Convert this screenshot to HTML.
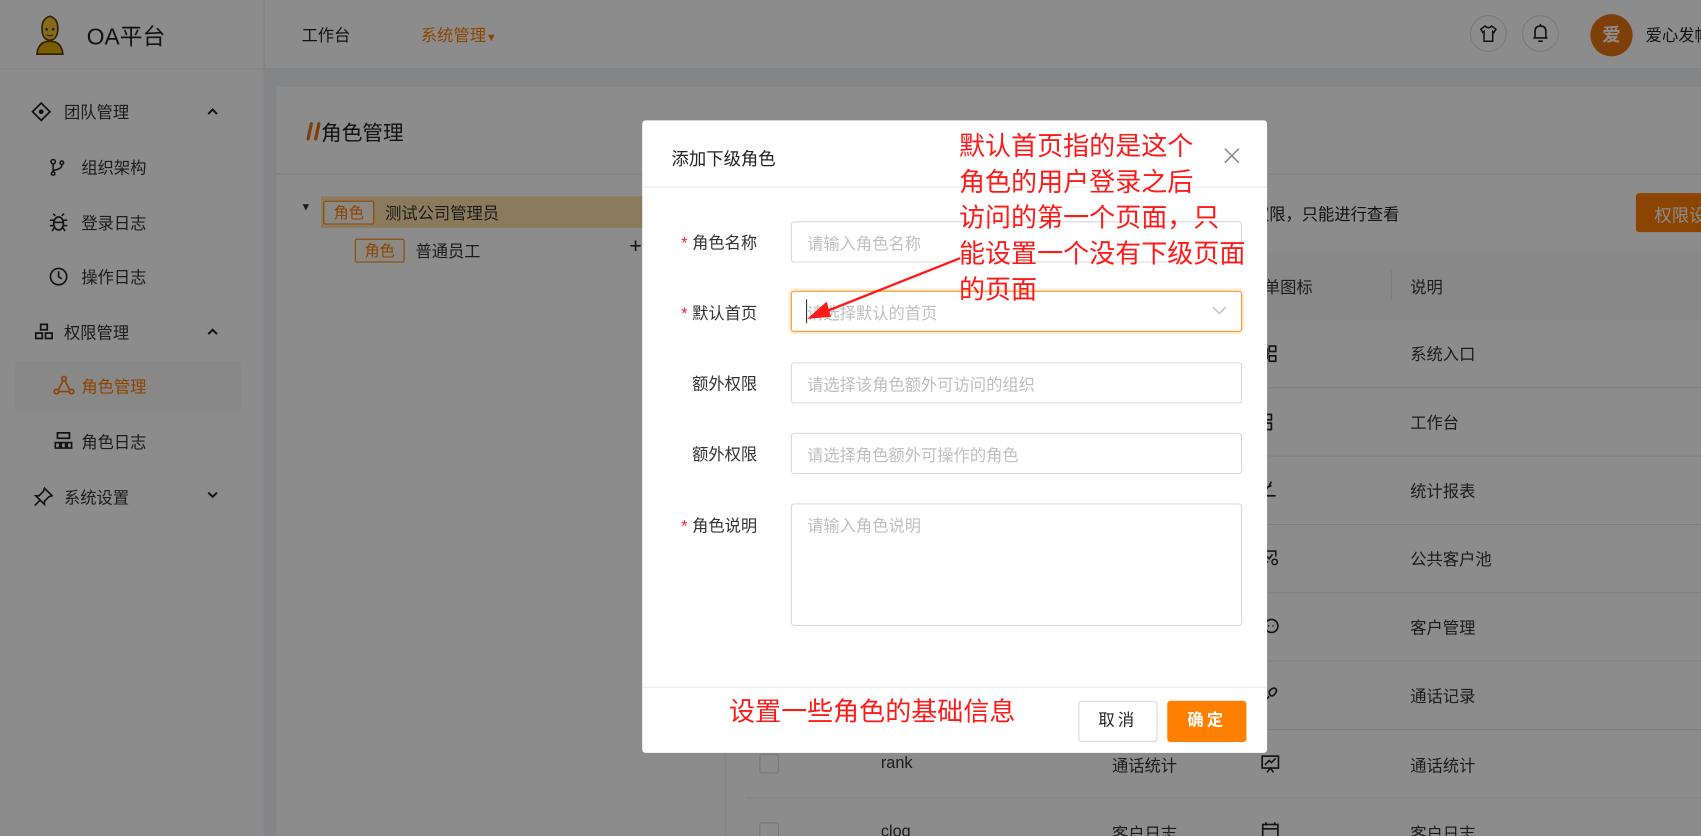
<!DOCTYPE html>
<html><head><meta charset="utf-8"><style>
*{box-sizing:border-box;margin:0;padding:0}
html,body{width:1701px;height:836px;overflow:hidden;background:#fff}
body{font-family:"Liberation Sans","Noto Sans CJK SC",sans-serif;color:#333}
#s{position:absolute;left:0;top:0;width:1568px;height:771px;transform:scale(1.08482);transform-origin:0 0;background:#f0f2f5;overflow:hidden}
.a{position:absolute;white-space:nowrap}
.f14{font-size:15px}
.ov{position:absolute;left:0;top:0;width:1568px;height:771px;background:rgba(0,0,0,0.45)}
.row{position:absolute;left:688px;width:880px;height:63px;border-bottom:1px solid #e8e8e8;background:#fff}
.cb{position:absolute;left:12px;top:22px;width:18px;height:18px;border:1px solid #d9d9d9;border-radius:2px;background:#fff}
.inp{position:absolute;left:729px;width:416px;height:38px;border:1px solid #d9d9d9;border-radius:3px;font-size:15px;color:#bfbfbf;padding:9px 14px}
.lab{position:absolute;right:870px;font-size:15px;color:#333}
.red{color:#f5222d}
.ann{position:absolute;color:#ff1a1a;font-size:24px;line-height:33px}
</style></head><body><div id="s">
<div class="a" style="left:0;top:0;width:1568px;height:64px;background:#fff;border-bottom:1px solid #e8e8e8"></div>
<div class="a" style="left:243px;top:0;width:1px;height:64px;background:#e8e8e8"></div>
<svg class="a" style="left:31px;top:13px" width="30" height="38" viewBox="0 0 30 38"><path d="M15 2 C8 4 7 10 8 17 C9 22 12 24 15 24 C18 24 21 22 22 17 C23 10 22 4 15 2Z" fill="#f4c430" stroke="#5a3a00" stroke-width="1.5"/><path d="M3 37 C4 28 9 25 15 25 C21 25 26 28 27 37Z" fill="#e0a800" stroke="#5a3a00" stroke-width="1.5"/><circle cx="12" cy="14" r="1.2" fill="#333"/><circle cx="18" cy="14" r="1.2" fill="#333"/><path d="M12 19 Q15 21 18 19" stroke="#333" fill="none"/></svg>
<div class="a" style="left:80px;top:18px;font-size:21px;color:#222">OA平台</div>
<div class="a f14" style="left:278px;top:22px;color:#222">工作台</div>
<div class="a f14" style="left:388px;top:22px;color:#ff7f00">系统管理<span style="font-size:10px">▼</span></div>
<div class="a" style="left:1355px;top:14px;width:34px;height:34px;border:1px solid #ddd;border-radius:50%"></div>
<svg class="a" style="left:1363px;top:22px" width="18" height="18" viewBox="0 0 18 18"><path d="M6 2 L2 5 L4 8 L5 7 V16 H13 V7 L14 8 L16 5 L12 2 Q9 5 6 2Z" fill="none" stroke="#222" stroke-width="1.4"/></svg>
<div class="a" style="left:1403px;top:14px;width:34px;height:34px;border:1px solid #ddd;border-radius:50%"></div>
<svg class="a" style="left:1411px;top:21px" width="18" height="20" viewBox="0 0 18 20"><path d="M4 14 V8 Q4 3 9 3 Q14 3 14 8 V14 H15.5 H2.5Z" fill="none" stroke="#222" stroke-width="1.5"/><path d="M9 1 V3 M7 17 H11" stroke="#222" stroke-width="1.5"/></svg>
<div class="a" style="left:1466px;top:13px;width:39px;height:39px;border-radius:50%;background:#e8740f;color:#fff;font-size:17px;font-weight:bold;text-align:center;line-height:39px">爱</div>
<div class="a f14" style="left:1517px;top:22px;color:#222">爱心发帖</div>
<div class="a" style="left:0;top:64px;width:243px;height:707px;background:#fff"></div>
<div class="a" style="left:14px;top:333px;width:208px;height:47px;background:#f7f7f7;border-radius:4px"></div>
<svg class="a" style="left:29px;top:94px" width="18" height="18" viewBox="0 0 18 18"><path d="M9 1 L17 9 L9 17 L1 9Z" fill="none" stroke="#222" stroke-width="1.6"/><circle cx="9" cy="9" r="2.2" fill="#222"/></svg>
<div class="a f14" style="left:59px;top:93px">团队管理</div>
<svg class="a" style="left:190px;top:99px" width="12" height="8" viewBox="0 0 12 8"><path d="M2 6 L6 2 L10 6" fill="none" stroke="#222" stroke-width="1.8"/></svg>
<svg class="a" style="left:46px;top:146px" width="14" height="16" viewBox="0 0 14 16"><circle cx="3" cy="3" r="2" fill="none" stroke="#222" stroke-width="1.4"/><circle cx="3" cy="14" r="1.6" fill="none" stroke="#222" stroke-width="1.4"/><circle cx="11" cy="4" r="1.6" fill="none" stroke="#222" stroke-width="1.4"/><path d="M3 5 V12 M11 6 Q11 10 3 11" fill="none" stroke="#222" stroke-width="1.4"/></svg>
<div class="a f14" style="left:75px;top:144px">组织架构</div>
<svg class="a" style="left:45px;top:196px" width="18" height="18" viewBox="0 0 18 18"><ellipse cx="9" cy="10" rx="4.5" ry="6" fill="none" stroke="#222" stroke-width="1.5"/><path d="M1 7 H5 M13 7 H17 M1 12 H4.5 M13.5 12 H17 M3 17 L5 14 M15 17 L13 14 M6 3 L4 1 M12 3 L14 1 M4.5 9 H13.5" stroke="#222" stroke-width="1.4"/></svg>
<div class="a f14" style="left:75px;top:195px">登录日志</div>
<svg class="a" style="left:45px;top:246px" width="18" height="18" viewBox="0 0 18 18"><circle cx="9" cy="9" r="7.5" fill="none" stroke="#222" stroke-width="1.5"/><path d="M9 4 V9 L12 11" fill="none" stroke="#222" stroke-width="1.5"/></svg>
<div class="a f14" style="left:75px;top:245px">操作日志</div>
<svg class="a" style="left:32px;top:298px" width="17" height="15" viewBox="0 0 17 15"><rect x="5.5" y="1" width="6" height="5" fill="none" stroke="#222" stroke-width="1.6"/><rect x="1" y="9" width="6" height="5" fill="none" stroke="#222" stroke-width="1.6"/><rect x="10" y="9" width="6" height="5" fill="none" stroke="#222" stroke-width="1.6"/></svg>
<div class="a f14" style="left:59px;top:296px">权限管理</div>
<svg class="a" style="left:190px;top:302px" width="12" height="8" viewBox="0 0 12 8"><path d="M2 6 L6 2 L10 6" fill="none" stroke="#222" stroke-width="1.8"/></svg>
<svg class="a" style="left:49px;top:346px" width="20" height="18" viewBox="0 0 20 18"><circle cx="10" cy="3" r="2" fill="none" stroke="#ff7f00" stroke-width="1.5"/><circle cx="3" cy="15" r="2" fill="none" stroke="#ff7f00" stroke-width="1.5"/><circle cx="17" cy="15" r="2" fill="none" stroke="#ff7f00" stroke-width="1.5"/><path d="M9 5 L5 13 M11 5 L15 13 M5 15 H15" stroke="#ff7f00" stroke-width="1.5"/></svg>
<div class="a f14" style="left:75px;top:346px;color:#ff7f00">角色管理</div>
<svg class="a" style="left:50px;top:398px" width="17" height="16" viewBox="0 0 17 16"><rect x="3" y="1" width="11" height="5" fill="none" stroke="#222" stroke-width="1.6"/><rect x="1" y="10" width="4" height="5" fill="none" stroke="#222" stroke-width="1.5"/><rect x="6.5" y="10" width="4" height="5" fill="none" stroke="#222" stroke-width="1.5"/><rect x="12" y="10" width="4" height="5" fill="none" stroke="#222" stroke-width="1.5"/></svg>
<div class="a f14" style="left:75px;top:397px">角色日志</div>
<svg class="a" style="left:31px;top:449px" width="18" height="18" viewBox="0 0 18 18"><path d="M10 1 L17 8 L14 9 L10 13 L10 16 L2 8 L5 8 L9 4Z M6 12 L1 17" fill="none" stroke="#222" stroke-width="1.5"/></svg>
<div class="a f14" style="left:59px;top:448px">系统设置</div>
<svg class="a" style="left:190px;top:452px" width="12" height="8" viewBox="0 0 12 8"><path d="M2 2 L6 6 L10 2" fill="none" stroke="#222" stroke-width="1.8"/></svg>
<div class="a" style="left:255px;top:80px;width:1313px;height:691px;background:#fff"></div>
<div class="a" style="left:255px;top:160px;width:1313px;height:1px;background:#e8e8e8"></div>
<svg class="a" style="left:282px;top:112px" width="14" height="18" viewBox="0 0 14 18"><path d="M5 2 L2 16 M12 2 L9 16" stroke="#e8740f" stroke-width="3" stroke-linecap="round"/></svg>
<div class="a" style="left:296px;top:108px;font-size:19px;color:#222">角色管理</div>
<div class="a" style="left:668px;top:160px;width:1px;height:611px;background:#e8e8e8"></div>
<div class="a" style="left:277px;top:186px;font-size:10px">▼</div>
<div class="a" style="left:296px;top:181px;width:372px;height:29px;background:#ffdfa8"></div>
<div class="a" style="left:298px;top:185px;width:47px;height:22px;border:1px solid #ff7f00;border-radius:2px;color:#ff7f00;font-size:14px;text-align:center;line-height:20px;background:#fff8ee">角色</div>
<div class="a f14" style="left:355px;top:186px">测试公司管理员</div>
<div class="a" style="left:327px;top:220px;width:46px;height:22px;border:1px solid #ff7f00;border-radius:2px;color:#ff7f00;font-size:14px;text-align:center;line-height:20px;background:#fff8ee">角色</div>
<div class="a f14" style="left:383px;top:221px">普通员工</div>
<div class="a" style="left:580px;top:216px;font-size:20px;color:#222">+</div>
<div class="a f14" style="left:1140px;top:187px;color:#222">看权限，只能进行查看</div>
<div class="a" style="left:1508px;top:178px;width:80px;height:36px;background:#ff7f00;border-radius:3px;color:#fff;font-size:16px;padding:7px 17px">权限设置</div>
<div class="a" style="left:688px;top:232px;width:880px;height:63px;background:#f7f7f7"></div>
<div class="a" style="left:1282px;top:249px;width:1px;height:28px;background:#e0e0e0"></div>
<div class="a f14" style="left:1150px;top:254px">菜单图标</div>
<div class="a f14" style="left:1300px;top:254px">说明</div>
<div class="row" style="top:295px"></div><div class="a f14" style="left:1300px;top:316px">系统入口</div>
<div class="row" style="top:358px"></div><div class="a f14" style="left:1300px;top:379px">工作台</div>
<div class="row" style="top:421px"></div><div class="a f14" style="left:1300px;top:442px">统计报表</div>
<div class="row" style="top:484px"></div><div class="a f14" style="left:1300px;top:505px">公共客户池</div>
<div class="row" style="top:547px"></div><div class="a f14" style="left:1300px;top:568px">客户管理</div>
<div class="row" style="top:610px"></div><div class="a f14" style="left:1300px;top:631px">通话记录</div>
<svg class="a" style="left:1160px;top:317px" width="22" height="18" viewBox="0 0 22 18"><rect x="10" y="2" width="6" height="5" fill="none" stroke="#222" stroke-width="1.5"/><rect x="10" y="11" width="6" height="5" fill="none" stroke="#222" stroke-width="1.5"/><path d="M4 9 H10 M8 4 V14" stroke="#222" stroke-width="1.5"/></svg>
<svg class="a" style="left:1160px;top:380px" width="22" height="18" viewBox="0 0 22 18"><rect x="6" y="2" width="6" height="5" fill="none" stroke="#222" stroke-width="1.5"/><rect x="6" y="10" width="6" height="6" fill="none" stroke="#222" stroke-width="1.5"/></svg>
<svg class="a" style="left:1160px;top:442px" width="22" height="18" viewBox="0 0 22 18"><path d="M6 5 V15 H16 M12 2 L10 6 M12 6 Q8 6 7 10" fill="none" stroke="#222" stroke-width="1.5"/></svg>
<svg class="a" style="left:1160px;top:505px" width="22" height="18" viewBox="0 0 22 18"><path d="M6 3 H16 V8 M6 3 V13 H9 M8 8 L10 10 L13 6" fill="none" stroke="#222" stroke-width="1.4"/><circle cx="15" cy="13" r="2.5" fill="none" stroke="#222" stroke-width="1.4"/></svg>
<svg class="a" style="left:1160px;top:568px" width="22" height="18" viewBox="0 0 22 18"><circle cx="12" cy="9" r="6" fill="none" stroke="#222" stroke-width="1.5"/><path d="M9 9 H10 M13 9 H14" stroke="#222" stroke-width="1.5"/></svg>
<svg class="a" style="left:1160px;top:631px" width="22" height="18" viewBox="0 0 22 18"><path d="M6 15 L10 11 M10 6 Q14 2 16 4 Q18 6 14 10 Q10 12 10 6Z" fill="none" stroke="#222" stroke-width="1.5"/></svg>
<div class="row" style="top:673px"><div class="cb"></div></div>
<div class="a f14" style="left:812px;top:695px">rank</div><div class="a f14" style="left:1025px;top:695px">通话统计</div><div class="a f14" style="left:1300px;top:695px">通话统计</div>
<svg class="a" style="left:1162px;top:695px" width="18" height="18" viewBox="0 0 18 18"><rect x="1.5" y="2" width="15" height="11" fill="none" stroke="#222" stroke-width="1.5"/><path d="M4 10 L8 6 L10 8 L14 4 M6 17 L9 13 L12 17" fill="none" stroke="#222" stroke-width="1.4"/></svg>
<div class="row" style="top:736px"><div class="cb"></div></div>
<div class="a f14" style="left:812px;top:758px">clog</div><div class="a f14" style="left:1025px;top:758px">客户日志</div><div class="a f14" style="left:1300px;top:758px">客户日志</div>
<svg class="a" style="left:1162px;top:757px" width="18" height="18" viewBox="0 0 18 18"><rect x="2" y="3" width="14" height="13" fill="none" stroke="#222" stroke-width="1.5"/><path d="M2 7 H16 M5 1 V4 M13 1 V4" stroke="#222" stroke-width="1.5"/></svg>
<div class="ov"></div>
<div class="a" style="left:592px;top:111px;width:576px;height:583px;background:#fff;border-radius:3px"></div>
<div class="a" style="left:619px;top:133px;font-size:16px;color:#222">添加下级角色</div>
<svg class="a" style="left:1128px;top:136px" width="15" height="15" viewBox="0 0 15 15"><path d="M1 1 L14 14 M14 1 L1 14" stroke="#888" stroke-width="1.4"/></svg>
<div class="a" style="left:592px;top:172px;width:576px;height:1px;background:#ebebeb"></div>
<div class="lab" style="top:213px"><span class="red">* </span>角色名称</div>
<div class="inp" style="top:204px">请输入角色名称</div>
<div class="lab" style="top:278px"><span class="red">* </span>默认首页</div>
<div class="inp" style="top:268px;border-color:#ff9a2e;box-shadow:0 0 0 2px rgba(255,127,0,0.15);color:#bfbfbf">请选择默认的首页</div>
<div class="a" style="left:743px;top:276px;width:1px;height:22px;background:#333"></div>
<svg class="a" style="left:1117px;top:281px" width="14" height="10" viewBox="0 0 14 10"><path d="M1 2 L7 8 L13 2" fill="none" stroke="#c0c0c0" stroke-width="1.3"/></svg>
<div class="lab" style="top:343px">额外权限</div>
<div class="inp" style="top:334px">请选择该角色额外可访问的组织</div>
<div class="lab" style="top:408px">额外权限</div>
<div class="inp" style="top:399px">请选择角色额外可操作的角色</div>
<div class="lab" style="top:474px"><span class="red">* </span>角色说明</div>
<div class="inp" style="top:464px;height:113px">请输入角色说明</div>
<div class="a" style="left:592px;top:633px;width:576px;height:1px;background:#ebebeb"></div>
<div class="a" style="left:994px;top:646px;width:73px;height:38px;border:1px solid #d9d9d9;border-radius:3px;font-size:15px;text-align:center;line-height:36px;letter-spacing:3px;color:#222">取消</div>
<div class="a" style="left:1076px;top:646px;width:73px;height:38px;background:#ff7f00;border-radius:3px;font-size:15px;text-align:center;line-height:38px;letter-spacing:3px;color:#fff;font-weight:bold">确定</div>
<div class="ann" style="left:884px;top:119px">默认首页指的是这个<br>角色的用户登录之后<br>访问的第一个页面，只<br>能设置一个没有下级页面<br>的页面</div>
<svg class="a" style="left:740px;top:230px" width="150" height="70" viewBox="0 0 150 70"><path d="M145 8 L14 60" stroke="#ff1a1a" stroke-width="2.2"/><path d="M4 64 L22 48 L26 62Z" fill="#ff1a1a"/></svg>
<div class="ann" style="left:672px;top:640px">设置一些角色的基础信息</div>
</div></body></html>
